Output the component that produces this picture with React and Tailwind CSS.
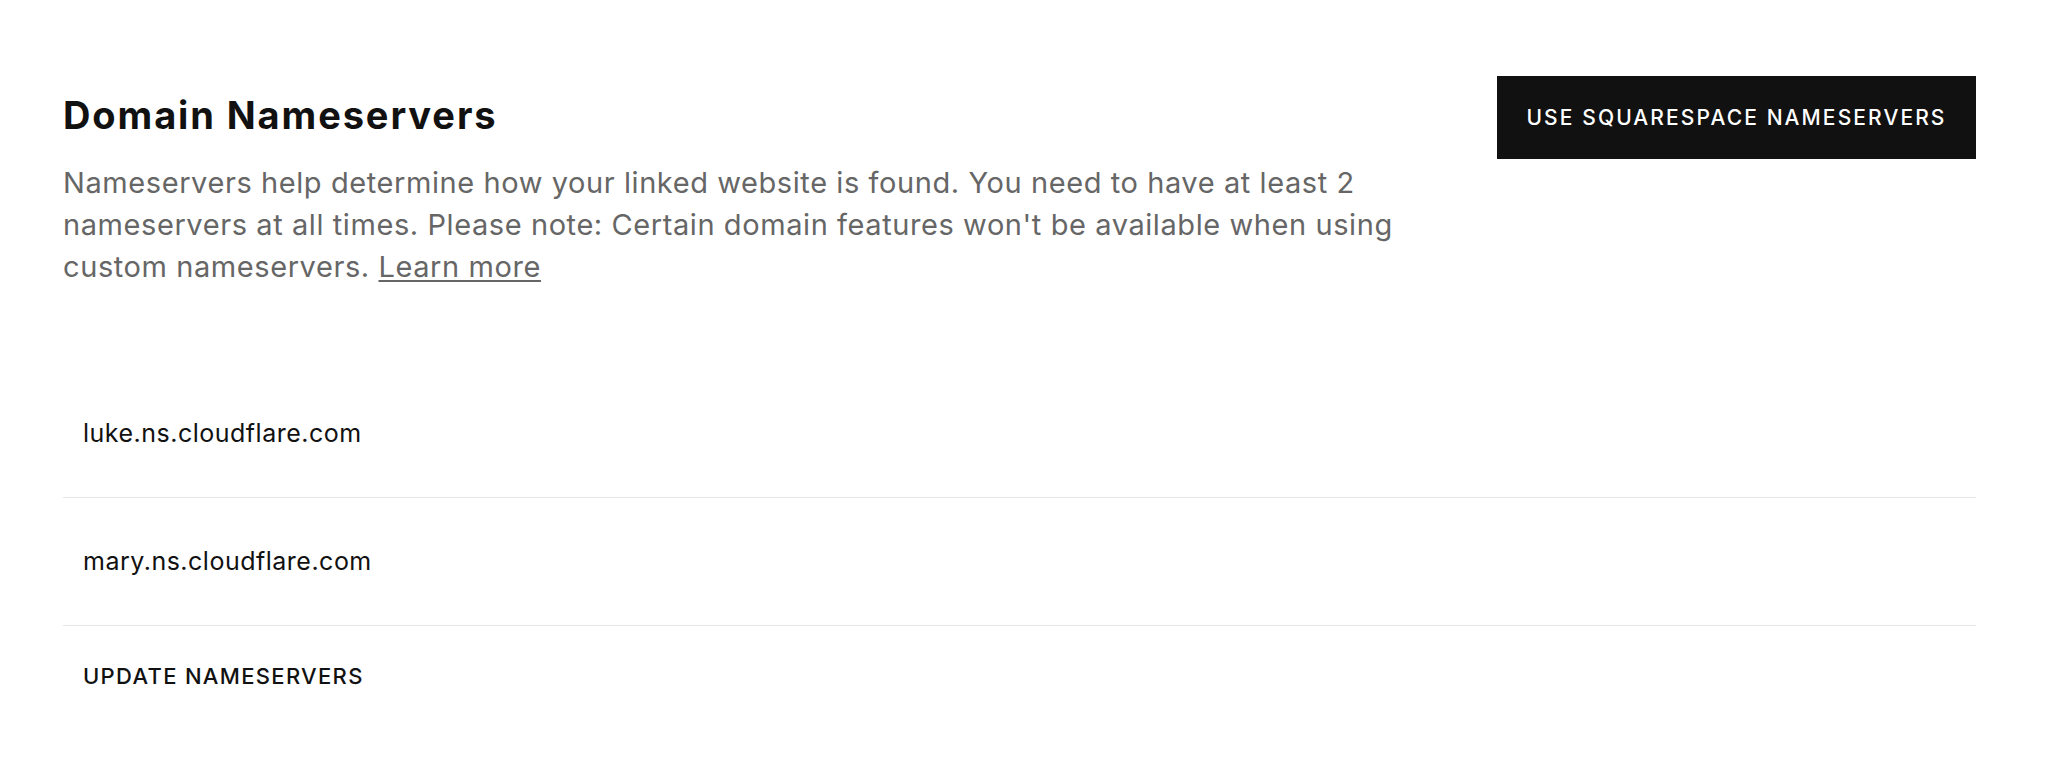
import React from "react";

const nameservers = ["luke.ns.cloudflare.com", "mary.ns.cloudflare.com"];

export default function App() {
  return (
    <div
      className="min-h-[757px] bg-white pl-[63px] pr-[72px] pt-[76px] text-[#111]"
      style={{ fontFamily: "Inter, 'Liberation Sans', sans-serif" }}
    >
      {/* Header: title, description and primary action */}
      <div className="flex items-start justify-between">
        <div className="max-w-[1380px]">
          <h1 className="pt-[17px] text-[38px] font-bold leading-[44px] tracking-[0.05em] text-[#111]">
            Domain Nameservers
          </h1>
          <p className="mt-[25px] text-[29px] leading-[42px] tracking-[0.02em] text-[#666]">
            Nameservers help determine how your linked website is found. You need to have at least 2
            nameservers at all times. Please note: Certain domain features won't be available when
            using custom nameservers.{" "}
            <a href="#" className="underline underline-offset-[3px]">
              Learn more
            </a>
          </p>
        </div>
        <button className="h-[83px] w-[479px] shrink-0 bg-[#111] text-[21px] font-medium tracking-[0.1em] text-white">
          USE SQUARESPACE NAMESERVERS
        </button>
      </div>

      {/* Nameserver list */}
      <ul className="mt-[82px]">
        {nameservers.map((ns) => (
          <li
            key={ns}
            className="flex h-[128px] items-center border-b border-[#e6e6e6] pl-[20px] text-[25px] tracking-[0.02em] text-[#111]"
          >
            {ns}
          </li>
        ))}
      </ul>
      <div className="flex h-[100px] items-center pl-[20px]">
        <button className="text-[22px] font-medium tracking-[0.06em] text-[#111]">
          UPDATE NAMESERVERS
        </button>
      </div>
    </div>
  );
}
